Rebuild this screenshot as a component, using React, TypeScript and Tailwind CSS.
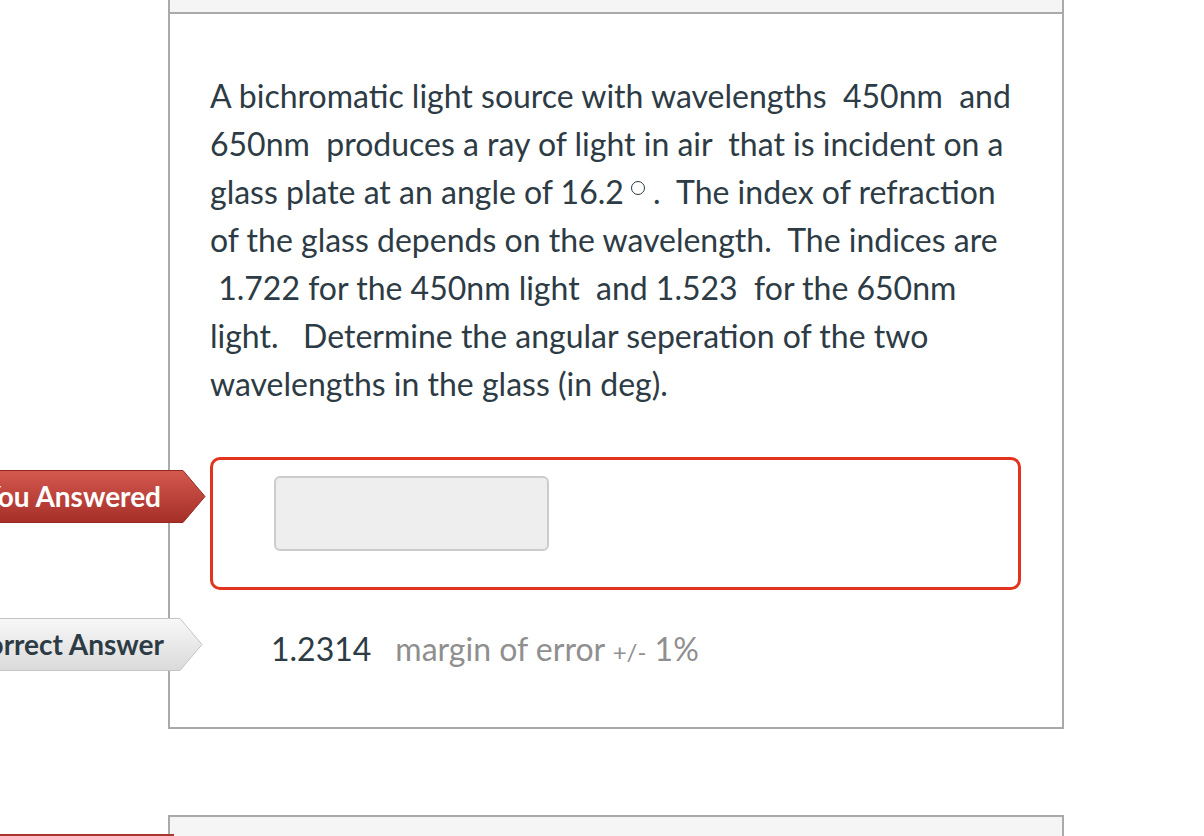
import React from "react";

const questionLines = [
  "A bichromatic light source with wavelengths  450nm  and",
  "650nm  produces a ray of light in air  that is incident on a",
  "DEG",
  "of the glass depends on the wavelength.  The indices are",
  " 1.722 for the 450nm light  and 1.523  for the 650nm",
  "light.   Determine the angular seperation of the two",
  "wavelengths in the glass (in deg).",
];

const AnswerLabel = ({
  text,
  variant,
  top,
}: {
  text: string;
  variant: "red" | "gray";
  top: string;
}) => {
  const red = variant === "red";
  const id = red ? "lblRed" : "lblGray";
  return (
    <div className={`absolute ${top} right-[calc(100%+7px)] h-[53px] w-[260px]`}>
      <svg
        className="absolute inset-0 h-full w-full"
        viewBox="0 0 260 53"
        preserveAspectRatio="none"
      >
        <defs>
          <linearGradient id={id} x1="0" y1="0" x2="0" y2="1">
            <stop offset="0" stopColor={red ? "#d4584e" : "#f8f8f8"} />
            <stop offset="1" stopColor={red ? "#a52f28" : "#dadada"} />
          </linearGradient>
        </defs>
        <polygon
          points="0.5,0.5 237,0.5 259,26.5 237,52.5 0.5,52.5"
          fill={`url(#${id})`}
          stroke={red ? "#932920" : "#c4c4c4"}
          strokeWidth="1"
        />
      </svg>
      <div
        className={`relative flex h-full items-center justify-end pb-[2px] text-[28px] font-bold ${
          red ? "pr-[45px] text-white" : "pr-[39px] text-[#2d3b45]"
        }`}
      >
        {text}
      </div>
    </div>
  );
};

export default function App() {
  return (
    <div className="relative min-h-screen overflow-hidden bg-white font-[Lato,sans-serif]">
      <div className="ml-[168px] w-[896px]">
        {/* question card */}
        <div className="border-x-2 border-b-2 border-[#aaaaaa]">
          <div className="h-[14px] border-b-2 border-[#aaaaaa] bg-[#f5f5f5]" />
          <div className="pt-[58px] pr-[41px] pb-[55px] pl-[40px]">
            <div className="text-[32px] leading-[48px] text-[#2d3b45]">
              {questionLines.map((line, i) =>
                line === "DEG" ? (
                  <div key={i} className="whitespace-pre">
                    glass plate at an angle of 16.2
                    <span className="mt-[13px] ml-[7px] inline-block h-[14px] w-[14px] rounded-full border-[1.5px] border-[#2d3b45] align-top" />
                    {" .  The index of refraction"}
                  </div>
                ) : (
                  <div key={i} className="whitespace-pre">
                    {line}
                  </div>
                ),
              )}
            </div>

            {/* your answer */}
            <div className="relative mt-[49px] h-[133px] rounded-[10px] border-[3px] border-[#e2331f] pt-[16px] pl-[61px]">
              <AnswerLabel text="You Answered" variant="red" top="top-[10px]" />
              <div className="h-[75px] w-[275px] rounded-[6px] border-2 border-[#cccccc] bg-[#eeeeee]" />
            </div>

            {/* correct answer */}
            <div className="relative mt-[28px] h-[54px] pt-[7px] pl-[61px] text-[32px] leading-[48px]">
              <AnswerLabel text="Correct Answer" variant="gray" top="top-0" />
              <span className="text-[#2d3b45]">1.2314</span>
              <span className="ml-[24px] text-[#8f8f8f]">
                margin of error <span className="text-[24px]">+/-</span> 1%
              </span>
            </div>
          </div>
        </div>

        {/* next card */}
        <div className="relative mt-[86px] h-[40px] border-x-2 border-t-2 border-[#aaaaaa] bg-[#f5f5f5]">
          <div className="absolute top-[17px] left-[-170px] h-[2px] w-[174px] bg-[#a8362f]" />
        </div>
      </div>
    </div>
  );
}
